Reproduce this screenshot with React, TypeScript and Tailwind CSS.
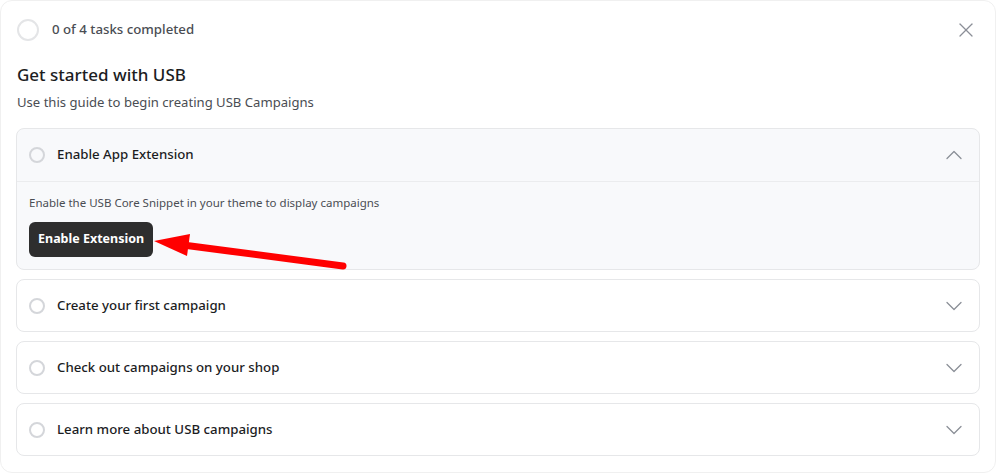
import React from 'react';
import { X, ChevronUp, ChevronDown } from 'lucide-react';

interface Task {
  title: string;
  open?: boolean;
}

const tasks: Task[] = [
  { title: 'Enable App Extension', open: true },
  { title: 'Create your first campaign' },
  { title: 'Check out campaigns on your shop' },
  { title: 'Learn more about USB campaigns' },
];

// red pointer drawn over the card body
const RedArrow: React.FC = () => (
  <svg
    className="pointer-events-none absolute left-[130px] top-[34px]"
    width="210"
    height="60"
    viewBox="0 0 210 60"
  >
    <line x1="196" y1="50" x2="36" y2="29" stroke="#ff0000" strokeWidth="7" strokeLinecap="round" />
    <polygon points="7,25 43,18 40,40" fill="#ff0000" />
  </svg>
);

const TaskRow: React.FC<{ task: Task }> = ({ task }) => {
  if (task.open) {
    return (
      <div className="rounded-lg border border-[#e6e7e9] bg-[#f8f9fb]">
        <div className="flex h-[53px] items-center border-b border-[#ebecee] pl-3 pr-[11px]">
          <span className="h-4 w-4 rounded-full border-2 border-[#d4d6da]" />
          <span className="ml-3 text-[13.25px] font-medium text-[#1c1d1f]">{task.title}</span>
          <ChevronUp size={28} strokeWidth={1.1} className="ml-auto text-[#8b8f97]" />
        </div>
        <div className="relative px-3 pt-[13px] pb-[12px]">
          <p className="text-[11.5px] leading-4 text-[#4a4d53]">
            Enable the USB Core Snippet in your theme to display campaigns
          </p>
          <button className="mt-[11px] h-[35px] rounded-md bg-[#2e2e2e] px-[9px] text-[12.5px] font-bold text-white">
            Enable Extension
          </button>
          <RedArrow />
        </div>
      </div>
    );
  }

  return (
    <div className="flex h-[53px] items-center rounded-lg border border-[#e6e7e9] bg-white pl-3 pr-[11px]">
      <span className="h-4 w-4 rounded-full border-2 border-[#d4d6da]" />
      <span className="ml-3 text-[13.25px] font-medium text-[#1c1d1f]">{task.title}</span>
      <ChevronDown size={28} strokeWidth={1.1} className="ml-auto text-[#8b8f97]" />
    </div>
  );
};

export default function App() {
  return (
    <div className="h-[473px] w-[996px] bg-white font-['Noto_Sans',sans-serif]">
      <div className="h-full rounded-xl border border-[#f0f0f0] bg-white px-[15px] pt-[18px]">
        <div className="flex h-[22px] items-center">
          <span className="ml-px h-[22px] w-[22px] rounded-full border-2 border-[#e4e5e7]" />
          <span className="ml-[13px] text-[13.25px] font-medium text-[#4a4d53]">0 of 4 tasks completed</span>
          <X size={24} strokeWidth={1.3} className="ml-auto mr-[2px] text-[#8b8f97]" />
        </div>
        <h1 className="mt-[20px] ml-px text-[17px] font-medium leading-7 text-[#1c1d1f]">Get started with USB</h1>
        <p className="mt-[3px] ml-px text-[13.1px] leading-5 text-[#4a4d53]">Use this guide to begin creating USB Campaigns</p>
        <div className="mt-4 flex flex-col gap-[9px]">
          {tasks.map((t, i) => (
            <TaskRow key={i} task={t} />
          ))}
        </div>
      </div>
    </div>
  );
}
